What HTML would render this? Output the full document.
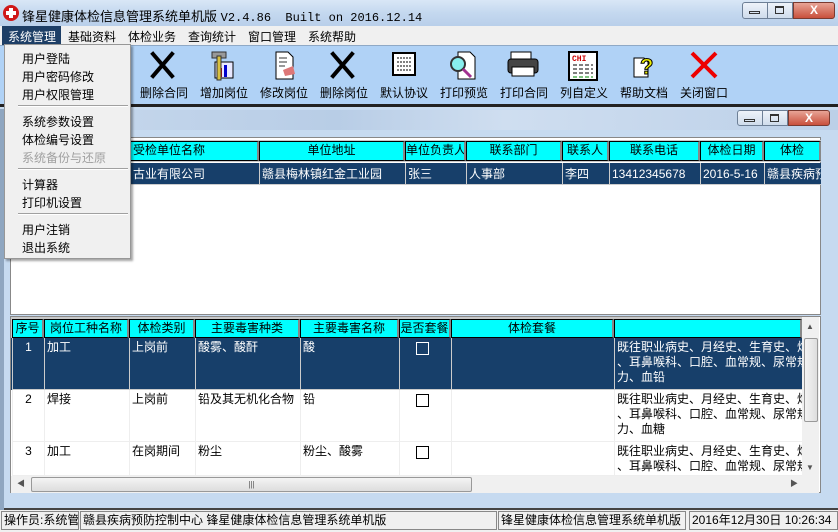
<!DOCTYPE html>
<html><head><meta charset="utf-8"><style>
*{margin:0;padding:0;box-sizing:border-box}
body{width:838px;height:532px;overflow:hidden;position:relative;background:#c9dcf0;font-family:"Liberation Sans","WenQuanYi Zen Hei","Noto Sans CJK SC",sans-serif;font-size:12px;color:#000}
.a{position:absolute}
.title{left:0;top:0;width:838px;height:26px;background:linear-gradient(180deg,#d9e7f6,#c4d8ef 50%,#b9cfea);}
.wb{border:1px solid #6d7f96;border-radius:3px;background:linear-gradient(#eef3fa,#cfdcec);}
.close{background:linear-gradient(#e8a496,#c9503c);border:1px solid #7a3a30;border-radius:0 3px 3px 0}
.menu{left:0;top:26px;width:838px;height:19px;background:#f0f0f0}
.menu span{position:absolute;top:2px}
.tb{left:0;top:45px;width:838px;height:62px;background:#b0d2f6;border-top:1px solid #8fa9c6;border-bottom:3px solid #222}
.tl{position:absolute;top:84px;width:60px;text-align:center;font-size:12px}
.hd{background:#00ffff;border:1px solid #000;border-right:2px solid #888;text-align:center;height:19px;line-height:17px;overflow:hidden;white-space:nowrap}
.cell{position:absolute;overflow:hidden;white-space:nowrap;line-height:18px}
.navy{background:#173f6a;color:#fff}
.drop{left:4px;top:44px;width:127px;height:215px;background:#f0f0f0;border:1px solid #979797;box-shadow:2px 2px 2px rgba(0,0,0,.35)}
.drop div{position:absolute;left:17px}
.sep{left:13px!important;width:110px;height:1px;border-top:1px solid #a0a0a0;border-bottom:1px solid #fff}
.st{position:absolute;top:511px;height:19px;border:1px solid #888;background:#f0f0f0;line-height:17px;padding-left:2px;white-space:nowrap;overflow:hidden}
.chk{position:absolute;width:13px;height:13px;border:1px solid #000;background:transparent}
</style></head><body>
<div class="a title"></div>
<div class="a" style="left:3px;top:5px;width:16px;height:16px;border-radius:50%;background:#d01818"></div>
<div class="a" style="left:9px;top:8px;width:4px;height:10px;background:#fff"></div>
<div class="a" style="left:6px;top:11px;width:10px;height:4px;background:#fff"></div>
<div class="a" style="left:22px;top:6px;font-size:13px;white-space:nowrap">锋星健康体检信息管理系统单机版 <span style="font-family:'Liberation Mono',monospace;font-size:12px">V2.4.86&nbsp; Built on 2016.12.14</span></div>
<div class="a wb" style="left:742px;top:2px;width:26px;height:17px;border-radius:3px 0 0 3px"></div>
<div class="a wb" style="left:767px;top:2px;width:26px;height:17px;border-radius:0"></div>
<div class="a close" style="left:793px;top:2px;width:42px;height:17px;color:#fff;text-align:center;font-weight:bold;line-height:15px">X</div>
<div class="a" style="left:749px;top:11px;width:11px;height:3px;border:1px solid #333"></div>
<div class="a" style="left:775px;top:6px;width:9px;height:8px;border:1px solid #333;border-top-width:2px"></div>

<div class="a menu">
<span style="left:2px;top:0;height:19px;width:59px;background:#1d3e66;color:#fff;padding:2px 0 0 6px">系统管理</span>
<span style="left:68px">基础资料</span><span style="left:128px">体检业务</span><span style="left:188px">查询统计</span><span style="left:248px">窗口管理</span><span style="left:308px">系统帮助</span>
</div>

<div class="a tb"></div>
<svg class="a" style="left:0;top:48px" width="838" height="36">
<g stroke="#000" stroke-width="4" stroke-linecap="square"><line x1="153" y1="6" x2="172" y2="28"/><line x1="172" y1="6" x2="153" y2="28"/>
<line x1="333" y1="6" x2="352" y2="28"/><line x1="352" y1="6" x2="333" y2="28"/></g>
<rect x="215" y="14" width="18" height="16" fill="#e8e8ff" stroke="#000"/><rect x="219" y="20" width="3" height="9" fill="#c00"/><rect x="224" y="17" width="3" height="12" fill="#00c"/><rect x="212" y="4" width="14" height="6" fill="#999" stroke="#333"/><rect x="217" y="8" width="4" height="24" fill="#d8c040" stroke="#333"/>
<path d="M276 4h12l5 5v22h-17z" fill="#fff" stroke="#000"/><path d="M279 10h8M279 14h8M279 18h6" stroke="#333"/><path d="M283 22l10-4 2 8-10 2z" fill="#d77"/>
<rect x="393" y="5" width="22" height="22" fill="#fff" stroke="#000" stroke-width="2"/><path d="M397 10h14M397 14h14M397 18h14M397 22h14" stroke="#000" stroke-dasharray="2 1"/>
<path d="M458 4h12l5 5v22h-17z" fill="#fff" stroke="#000"/><circle cx="458" cy="16" r="7" fill="#8ee" stroke="#333" stroke-width="2"/><line x1="463" y1="21" x2="471" y2="29" stroke="#a03090" stroke-width="3"/>
<rect x="511" y="4" width="20" height="8" fill="#fff" stroke="#000"/><rect x="508" y="11" width="30" height="14" rx="3" fill="#444" stroke="#000"/><rect x="512" y="19" width="22" height="9" fill="#fff" stroke="#000"/>
<rect x="569" y="4" width="28" height="28" fill="#fff" stroke="#000" stroke-width="2"/><text x="572" y="13" font-size="8" fill="#c00" font-family="Liberation Mono" font-weight="bold">CHI</text><path d="M573 17h20M573 21h20M573 25h20" stroke="#000" stroke-dasharray="4 2"/><path d="M573 29h20" stroke="#080" stroke-dasharray="4 2"/>
<path d="M634 10h10l4 4v15h-14z" fill="#fff" stroke="#000"/><text x="640" y="26" font-size="22" font-weight="bold" fill="#ee0" stroke="#000" stroke-width="1" font-family="Liberation Sans">?</text>
<g stroke="#e00" stroke-width="4"><line x1="692" y1="5" x2="716" y2="29"/><line x1="716" y1="5" x2="692" y2="29"/></g>
</svg>
<div class="tl" style="left:134px">删除合同</div><div class="tl" style="left:194px">增加岗位</div><div class="tl" style="left:254px">修改岗位</div><div class="tl" style="left:314px">删除岗位</div><div class="tl" style="left:374px">默认协议</div><div class="tl" style="left:434px">打印预览</div><div class="tl" style="left:494px">打印合同</div><div class="tl" style="left:554px">列自定义</div><div class="tl" style="left:614px">帮助文档</div><div class="tl" style="left:674px">关闭窗口</div>

<div class="a" style="left:0;top:109px;width:838px;height:401px;background:#c6daf0;border-left:4px solid #8fa6c0"></div>
<div class="a" style="left:4px;top:110px;width:834px;height:20px;background:linear-gradient(90deg,#c9daee,#b8cde6 40%,#cfdef0 60%,#bcd0e8)"></div>
<div class="a wb" style="left:737px;top:110px;width:26px;height:16px;border-radius:3px 0 0 3px"></div>
<div class="a wb" style="left:762px;top:110px;width:26px;height:16px;border-radius:0"></div>
<div class="a close" style="left:788px;top:110px;width:42px;height:16px;color:#fff;text-align:center;font-weight:bold;line-height:14px">X</div>
<div class="a" style="left:744px;top:119px;width:11px;height:3px;border:1px solid #333"></div>
<div class="a" style="left:770px;top:114px;width:9px;height:8px;border:1px solid #333;border-top-width:2px"></div>

<div class="a" style="left:10px;top:137px;width:811px;height:178px;background:#fff;border:1px solid #888"></div>
<div class="a" style="left:821px;top:130px;width:17px;height:380px;background:#c6daf0"></div>
<div class="a" style="left:11px;top:140px;width:810px;height:22px;background:#c8c8c8"></div>
<div class="a navy" style="left:11px;top:163px;width:810px;height:22px"></div>
<div id="t1"></div>

<div class="a" style="left:10px;top:316px;width:811px;height:177px;background:#fff;border:1px solid #888"></div>
<div class="a" style="left:11px;top:317px;width:791px;height:21px;background:#c8c8c8"></div>
<div class="a navy" style="left:11px;top:338px;width:791px;height:52px"></div>
<div id="t2"></div>
<div class="a" style="left:802px;top:317px;width:17px;height:159px;background:#f0f0f0"></div>
<div class="a" style="left:804px;top:338px;width:14px;height:84px;background:linear-gradient(90deg,#f4f4f4,#ddd);border:1px solid #999;border-radius:2px"></div>
<div class="a" style="left:806px;top:322px;font-size:8px;color:#555">▲</div>
<div class="a" style="left:806px;top:463px;font-size:8px;color:#555">▼</div>
<div class="a" style="left:11px;top:476px;width:808px;height:17px;background:#f0f0f0"></div>
<div class="a" style="left:31px;top:477px;width:441px;height:15px;background:linear-gradient(#f4f4f4,#ddd);border:1px solid #999;border-radius:2px;text-align:center;font-size:8px;line-height:13px;color:#555">|||</div>
<div class="a" style="left:17px;top:478px;font-size:8px;color:#555">◀</div>
<div class="a" style="left:790px;top:478px;font-size:8px;color:#555">▶</div>
<div class="a" style="left:4px;top:504px;width:834px;height:6px;background:#c6daf0;border-bottom:2px solid #444"></div>

<div class="a" style="left:0;top:510px;width:838px;height:22px;background:#f0f0f0"></div>
<div class="st" style="left:1px;width:78px">操作员:系统管</div>
<div class="st" style="left:80px;width:417px">赣县疾病预防控制中心 锋星健康体检信息管理系统单机版</div>
<div class="st" style="left:498px;width:188px">锋星健康体检信息管理系统单机版</div>
<div class="st" style="left:689px;width:149px">2016年12月30日 10:26:34</div>

<div class="a drop">
<div style="top:5px">用户登陆</div><div style="top:23px">用户密码修改</div><div style="top:41px">用户权限管理</div>
<div class="sep" style="top:60px"></div>
<div style="top:68px">系统参数设置</div><div style="top:86px">体检编号设置</div><div style="top:104px;color:#a0a0a0">系统备份与还原</div>
<div class="sep" style="top:123px"></div>
<div style="top:131px">计算器</div><div style="top:149px">打印机设置</div>
<div class="sep" style="top:168px"></div>
<div style="top:176px">用户注销</div><div style="top:194px">退出系统</div>
</div>

<script>
function build(id,cols,hy,hh,rows){var h='';
cols.forEach(function(c){h+='<div class="a hd" style="left:'+c[0]+'px;top:'+hy+'px;width:'+(c[1]-c[0])+'px;height:'+hh+'px;'+(c[3]?'text-align:left;padding-left:2px':'')+'">'+c[2]+'</div>';});
rows.forEach(function(r){var y=r.y,hgt=r.h,col=r.navy?'#fff':'#000',bc=r.navy?'#ccc':'#eee';
cols.forEach(function(c,i){var t=r.c[i]||'';h+='<div class="cell" style="left:'+c[0]+'px;top:'+y+'px;width:'+(c[1]-c[0])+'px;height:'+hgt+'px;color:'+col+';border-left:1px solid '+bc+';border-bottom:1px solid '+bc+';padding:2px 2px 0 2px;line-height:'+(r.lh||18)+'px;'+(i==0&&r.center?'text-align:center':'')+'">'+t+'</div>';});});
document.getElementById(id).innerHTML=h;}
build('t1',[[130,259,'受检单位名称',1],[259,405,'单位地址'],[405,466,'单位负责人'],[466,562,'联系部门'],[562,609,'联系人'],[609,700,'联系电话'],[700,764,'体检日期'],[764,821,'体检',0]],141,20,
[{y:163,h:22,navy:1,c:['古业有限公司','赣县梅林镇红金工业园','张三','人事部','李四','13412345678','2016-5-16','赣县疾病预']}]);
build('t2',[[12,44,'序号'],[44,129,'岗位工种名称'],[129,195,'体检类别'],[195,300,'主要毒害种类'],[300,399,'主要毒害名称'],[399,451,'是否套餐'],[451,614,'体检套餐'],[614,802,'']],319,19,
[{y:338,h:52,navy:1,center:1,lh:15,c:['1','加工','上岗前','酸雾、酸酐','酸','','','既往职业病史、月经史、生育史、烟<br>、耳鼻喉科、口腔、血常规、尿常规<br>力、血铅']},
{y:390,h:52,center:1,lh:15,c:['2','焊接','上岗前','铅及其无机化合物','铅','','','既往职业病史、月经史、生育史、烟<br>、耳鼻喉科、口腔、血常规、尿常规<br>力、血糖']},
{y:442,h:34,center:1,lh:15,c:['3','加工','在岗期间','粉尘','粉尘、酸雾','','','既往职业病史、月经史、生育史、烟<br>、耳鼻喉科、口腔、血常规、尿常规']}]);
</script>
<div class="chk" style="left:416px;top:342px;border-color:#fff"></div>
<div class="chk" style="left:416px;top:394px"></div>
<div class="chk" style="left:416px;top:446px"></div>
</body></html>
